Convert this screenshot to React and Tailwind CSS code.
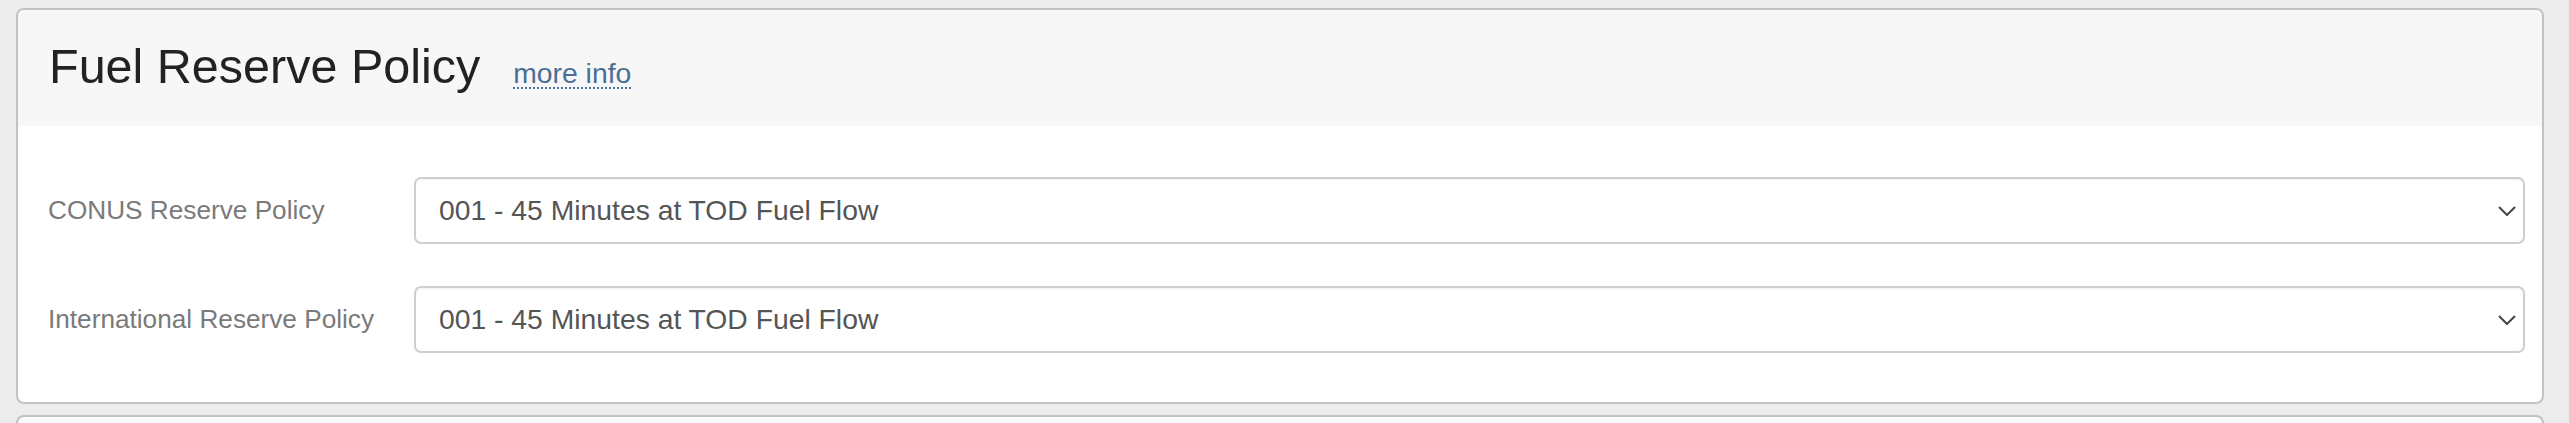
import React from 'react';

const policies = [
  { id: 'conus', label: 'CONUS Reserve Policy' },
  { id: 'intl', label: 'International Reserve Policy' },
];

function Chevron() {
  return (
    <svg width="18" height="10" viewBox="0 0 18 10" fill="none" className="pointer-events-none absolute right-[9px] top-1/2 -translate-y-1/2">
      <path d="M1 1l8 8 8-8" stroke="#444" strokeWidth="2" />
    </svg>
  );
}

function PolicySelect({ label }) {
  return (
    <div className="flex items-center">
      <label className="w-[366px] shrink-0 text-[26.2px] leading-none text-[#7a7a7a]">{label}</label>
      <div className="relative flex-1">
        <select
          defaultValue="001"
          className="h-[67px] w-full appearance-none rounded-[7px] border-2 border-[#cfcfcf] bg-white pl-[23px] pr-[40px] text-[28.3px] text-[#555] shadow-[inset_0_1px_2px_rgba(0,0,0,0.06)] outline-none"
        >
          <option value="001">001 - 45 Minutes at TOD Fuel Flow</option>
          <option value="002">002 - 30 Minutes at Holding Fuel Flow</option>
        </select>
        <Chevron />
      </div>
    </div>
  );
}

export default function App() {
  return (
    <div className="h-[423px] overflow-hidden bg-[#ececec] pt-[8px] pl-[16px] pr-[25px] font-['Liberation_Sans',Arial,sans-serif]">
      <section className="overflow-hidden rounded-[8px] border-2 border-[#c2c2c2] bg-white">
        <header className="flex h-[116px] items-start bg-[#f7f7f7] pl-[31px] pt-[32px]">
          <h2 className="text-[48.5px] leading-none text-[#222]">Fuel Reserve Policy</h2>
          <a href="#" className="ml-[33px] mt-[17px] border-b-2 border-dotted border-[#4a6f95] text-[28.3px] leading-none text-[#4a6f95]">
            more info
          </a>
        </header>
        <div className="flex flex-col gap-[42px] pt-[51px] pb-[49px] pl-[30px] pr-[17px]">
          {policies.map((p) => (
            <PolicySelect key={p.id} label={p.label} />
          ))}
        </div>
      </section>
      <section className="mt-[11px] h-[40px] rounded-t-[8px] border-2 border-b-0 border-[#c2c2c2] bg-[#fafafa]" />
    </div>
  );
}
